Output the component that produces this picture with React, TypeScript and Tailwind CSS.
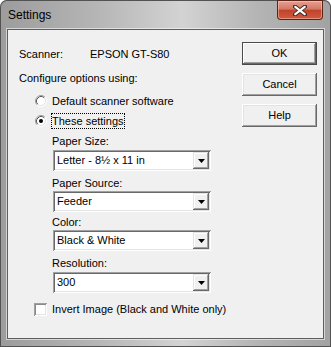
import React from "react";

const font = "font-['Liberation_Sans',Arial,sans-serif]";

function Radio({ checked }: { checked?: boolean }) {
  return (
    <svg width="12" height="12" viewBox="0 0 12 12" className="shrink-0">
      <circle cx="6" cy="6" r="5" fill="#fff" />
      <path d="M2.11 9.89 A5.5 5.5 0 0 1 9.89 2.11" fill="none" stroke="#9a9a9a" />
      <path d="M9.89 2.11 A5.5 5.5 0 0 1 2.11 9.89" fill="none" stroke="#ffffff" />
      <path d="M2.82 9.18 A4.5 4.5 0 0 1 9.18 2.82" fill="none" stroke="#5a5a5a" />
      <path d="M9.18 2.82 A4.5 4.5 0 0 1 2.82 9.18" fill="none" stroke="#e3e3e3" />
      {checked && <circle cx="6" cy="6" r="2" fill="#000" />}
    </svg>
  );
}

function Select({ value }: { value: string }) {
  return (
    <div className="ml-[34px] flex h-[21px] w-[158px] bg-white p-[2px] shadow-[inset_1px_1px_#a0a0a0,inset_-1px_-1px_#fff,inset_2px_2px_#696969,inset_-2px_-2px_#e3e3e3]">
      <div className="flex flex-1 items-center pl-[2px] leading-[13px]">{value}</div>
      <div className="flex w-[16px] items-center justify-center bg-[#f0f0f0] shadow-[inset_-1px_-1px_#696969,inset_1px_1px_#e3e3e3,inset_-2px_-2px_#a0a0a0,inset_2px_2px_#fff]">
        <svg width="7" height="4" viewBox="0 0 7 4">
          <polygon points="0,0 7,0 3.5,4" fill="#000" />
        </svg>
      </div>
    </div>
  );
}

function Button({ label, main }: { label: string; main?: boolean }) {
  return (
    <div
      className={
        "flex h-[23px] w-[75px] items-center justify-center bg-[#f0f0f0] leading-[13px] " +
        (main
          ? "shadow-[inset_0_0_0_1px_#4a4a4a,inset_-2px_-2px_#696969,inset_2px_2px_#fff,inset_-3px_-3px_#a0a0a0]"
          : "shadow-[inset_-1px_-1px_#696969,inset_1px_1px_#fff,inset_-2px_-2px_#a0a0a0,inset_2px_2px_#e3e3e3]")
      }
    >
      {label}
    </div>
  );
}

export default function App() {
  return (
    <div className={`h-[347px] w-[331px] bg-white text-[11px] text-black ${font}`}>
      <div className="flex h-full flex-col rounded-t-[7px] bg-[linear-gradient(90deg,#9c9c9c_0%,#b6b6b6_30%,#d3d3d3_55%,#b4b4b4_78%,#a2a2a2_100%)] px-[7px] pb-[8px] shadow-[inset_0_0_0_1px_#525252]">
        {/* Title bar */}
        <div className="flex h-[29px] items-start justify-between">
          <span className="pl-[1px] pt-[7px] text-[12px] leading-[16px]">Settings</span>
          <div className="mr-[1px] flex h-[20px] w-[46px] items-center justify-center rounded-b-[4px] bg-[linear-gradient(#e8a496,#d37865_45%,#c0442b_52%,#d25c41_100%)] shadow-[inset_0_0_0_1px_#5c2418,inset_0_0_0_2px_rgba(255,220,210,0.45)]">
            <svg width="14" height="11" viewBox="0 0 14 11">
              <path d="M2 1.5 L12 9.5 M12 1.5 L2 9.5" stroke="#3b2a28" strokeWidth="4" strokeLinecap="round" />
              <path d="M2.3 1.8 L11.7 9.2 M11.7 1.8 L2.3 9.2" stroke="#fff" strokeWidth="2.2" strokeLinecap="round" />
            </svg>
          </div>
        </div>

        {/* Client area */}
        <div className="flex flex-1 border border-[#5e5e5e] bg-[#f0f0f0] shadow-[0_0_0_1px_rgba(255,255,255,0.55)]">
          <div className="flex flex-1 flex-col pl-[11px]">
            <div className="mt-[18px] flex leading-[13px]">
              <span className="w-[71px]">Scanner:</span>
              <span>EPSON GT-S80</span>
            </div>
            <div className="mt-[11px] leading-[13px]">Configure options using:</div>

            <div className="mt-[8px] flex h-[16px] items-center gap-[4px] pl-[16px]">
              <Radio />
              <span className="border border-transparent leading-[14px]">Default scanner software</span>
            </div>
            <div className="mt-[4px] flex h-[16px] items-center gap-[4px] pl-[16px]">
              <Radio checked />
              <span className="border border-dotted border-black leading-[14px]">These settings</span>
            </div>

            <div className="mt-[6px] pl-[33px] leading-[13px]">Paper Size:</div>
            <div className="mt-[2px]">
              <Select value="Letter - 8½ x 11 in" />
            </div>
            <div className="mt-[6px] pl-[33px] leading-[13px]">Paper Source:</div>
            <div className="mt-[1px]">
              <Select value="Feeder" />
            </div>
            <div className="mt-[4px] pl-[33px] leading-[13px]">Color:</div>
            <div className="mt-[1px]">
              <Select value="Black & White" />
            </div>
            <div className="mt-[6px] pl-[33px] leading-[13px]">Resolution:</div>
            <div className="mt-[2px]">
              <Select value="300" />
            </div>

            <div className="mt-[8px] flex h-[16px] items-center gap-[5px] pl-[15px]">
              <div className="h-[13px] w-[13px] bg-white shadow-[inset_1px_1px_#a0a0a0,inset_-1px_-1px_#fff,inset_2px_2px_#8a8a8a,inset_-2px_-2px_#e3e3e3]" />
              <span className="leading-[13px]">Invert Image (Black and White only)</span>
            </div>
          </div>

          <div className="flex flex-col gap-[8px] pr-[6px] pt-[12px]">
            <Button label="OK" main />
            <Button label="Cancel" />
            <Button label="Help" />
          </div>
        </div>
      </div>
    </div>
  );
}
